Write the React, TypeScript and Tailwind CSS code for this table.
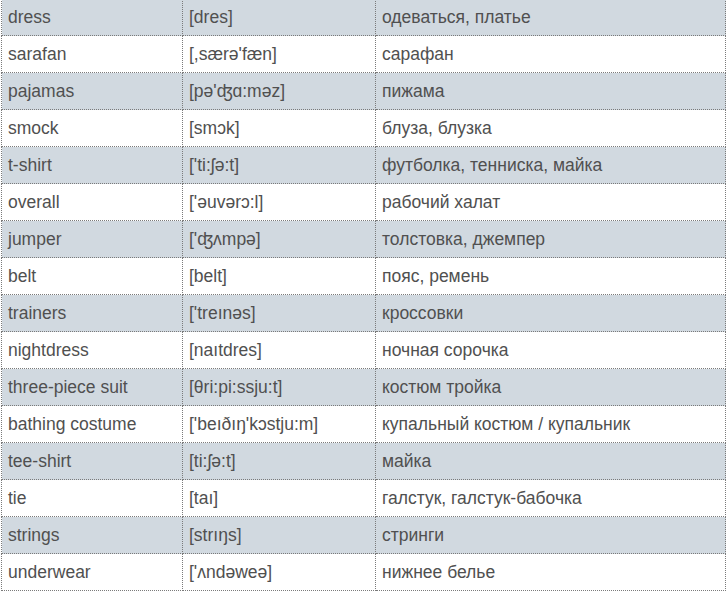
const rows = [
  ["dress", "[dres]", "одеваться, платье"],
  ["sarafan", "[,særə'fæn]", "сарафан"],
  ["pajamas", "[pə'ʤɑ:məz]", "пижама"],
  ["smock", "[smɔk]", "блуза, блузка"],
  ["t-shirt", "['ti:ʃə:t]", "футболка, тенниска, майка"],
  ["overall", "['əuvərɔ:l]", "рабочий халат"],
  ["jumper", "['ʤʌmpə]", "толстовка, джемпер"],
  ["belt", "[belt]", "пояс, ремень"],
  ["trainers", "['treınəs]", "кроссовки"],
  ["nightdress", "[naıtdres]", "ночная сорочка"],
  ["three-piece suit", "[θri:pi:ssju:t]", "костюм тройка"],
  ["bathing costume", "['beıðıŋ'kɔstju:m]", "купальный костюм / купальник"],
  ["tee-shirt", "[ti:ʃə:t]", "майка"],
  ["tie", "[taı]", "галстук, галстук-бабочка"],
  ["strings", "[strıŋs]", "стринги"],
  ["underwear", "['ʌndəweə]", "нижнее белье"],
];

export default function App() {
  return (
    <div className="h-[591px] w-[727px] overflow-hidden bg-white pl-[1px]">
      <table className="-mt-[2px] w-[725px] border-collapse text-[17.5px] text-[#505050] [font-family:'Liberation_Sans',Arial,sans-serif]">
        <colgroup>
          <col className="w-[181px]" />
          <col className="w-[193px]" />
          <col />
        </colgroup>
        <tbody>
          {rows.map((r, i) => (
            <tr key={i} className={i % 2 === 0 ? "bg-[#d1d9e0]" : "bg-white"}>
              {r.map((c, j) => (
                <td
                  key={j}
                  className="h-[37px] border border-dotted border-[#7a7a7a] px-[6px] pt-[2px] pb-0 align-middle leading-none"
                >
                  {c}
                </td>
              ))}
            </tr>
          ))}
        </tbody>
      </table>
    </div>
  );
}
